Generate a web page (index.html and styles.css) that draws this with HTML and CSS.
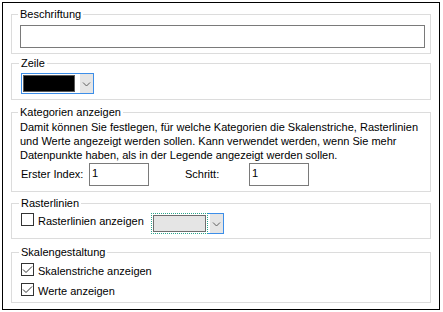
FILE: index.html
```html
<!DOCTYPE html>
<html lang="de">
<head>
    <meta charset="UTF-8">
    <title>Achseneigenschaften</title>
    <link rel="stylesheet" href="styles.css">
</head>
<body>
    <div class="dialog">
        <div class="group group-caption">
            <div class="group-title">Beschriftung</div>
            <input class="textbox wide" type="text" value="">
        </div>

        <div class="group group-line">
            <div class="group-title">Zeile</div>
            <div class="combo">
                <div class="swatch black"></div>
                <div class="drop">
                    <svg width="9" height="6" viewBox="0 0 9 6"><path d="M1 1.5 L4.5 5 L8 1.5" fill="none" stroke="#606060" stroke-width="1"/></svg>
                </div>
            </div>
        </div>

        <div class="group group-categories">
            <div class="group-title">Kategorien anzeigen</div>
            <p class="info">Damit können Sie festlegen, für welche Kategorien die Skalenstriche, Rasterlinien und Werte angezeigt werden sollen. Kann verwendet werden, wenn Sie mehr Datenpunkte haben, als in der Legende angezeigt werden sollen.</p>
            <div class="index-row">
                <label class="first-label">Erster Index:</label>
                <input class="textbox small" type="text" value="1">
                <label class="step-label">Schritt:</label>
                <input class="textbox small" type="text" value="1">
            </div>
        </div>

        <div class="group group-grid">
            <div class="group-title">Rasterlinien</div>
            <div class="grid-row">
                <label class="check"><span class="box"></span><span class="check-text">Rasterlinien anzeigen</span></label>
                <div class="combo-split">
                    <div class="combo-field">
                        <div class="swatch gray"></div>
                    </div>
                    <div class="drop-frame">
                        <div class="drop">
                            <svg width="9" height="6" viewBox="0 0 9 6"><path d="M1 1.5 L4.5 5 L8 1.5" fill="none" stroke="#606060" stroke-width="1"/></svg>
                        </div>
                    </div>
                </div>
            </div>
        </div>

        <div class="group group-scale">
            <div class="group-title">Skalengestaltung</div>
            <label class="check"><span class="box"><svg width="11" height="11" viewBox="0 0 11 11"><path d="M1 5.5 L4 8.5 L10 2.5" fill="none" stroke="#333" stroke-width="1"/></svg></span><span class="check-text">Skalenstriche anzeigen</span></label>
            <label class="check"><span class="box"><svg width="11" height="11" viewBox="0 0 11 11"><path d="M1 5.5 L4 8.5 L10 2.5" fill="none" stroke="#333" stroke-width="1"/></svg></span><span class="check-text">Werte anzeigen</span></label>
        </div>
    </div>
</body>
</html>
```

FILE: styles.css
```css
body {
    margin: 0;
    font-family: "Liberation Sans", Arial, sans-serif;
    font-size: 11px;
    line-height: 13px;
    color: #000;
    background: #fff;
}

.dialog {
    margin: 2px;
    width: 436px;
    height: 306px;
    border: 1px solid #000;
    overflow: hidden;
}

/* group boxes */
.group {
    margin: 0 8px;
    padding: 0 5px 0 8px;
    border: 1px solid #dcdcdc;
    box-sizing: border-box;
}

.group-title {
    display: table;
    margin: -7px 0 0 -2px;
    padding: 0 2px;
    background: #fff;
    line-height: 13px;
}

.group-caption {
    margin-top: 11px;
    height: 40px;
}

.group-line {
    margin-top: 9px;
    height: 37px;
    padding-left: 9px;
}

.group-categories {
    margin-top: 12px;
    height: 80px;
}

.group-grid {
    margin-top: 11px;
    height: 36px;
    padding-left: 9px;
}

.group-scale {
    margin-top: 13px;
    height: 51px;
    padding-left: 9px;
}

/* inputs */
.textbox {
    font-family: inherit;
    font-size: 11px;
    line-height: 13px;
    border: 1px solid #7a7a7a;
    margin: 0;
    height: 23px;
    box-sizing: border-box;
    outline: none;
    color: #000;
    background: #fff;
}

.textbox.wide {
    display: block;
    margin-top: 4px;
    width: 405px;
    padding: 0 2px;
}

.textbox.small {
    width: 60px;
    padding: 2px 2px 6px 2px;
}

.info {
    margin: 1px 0 0 0;
    line-height: 14px;
}

.index-row {
    display: flex;
    align-items: center;
    margin-top: 1px;
}

.first-label {
    margin-left: 1px;
    width: 68px;
}

.step-label {
    margin-left: 36px;
    width: 64px;
}

/* colour combos */
.combo {
    display: flex;
    margin-top: 3px;
    width: 73px;
    height: 21px;
    box-sizing: border-box;
    border: 1px solid #3d8ee8;
}

.swatch {
    margin: 1px;
    width: 52px;
    box-sizing: border-box;
    border: 1px solid #5a5a5a;
}

.swatch.black {
    background: #000;
}

.swatch.gray {
    width: 53px;
    height: 17px;
    border-color: #6d6d6d;
    background: #e5e5e5;
}

.drop {
    margin-left: auto;
    width: 13px;
    background: #e5e5e5;
    display: flex;
    align-items: center;
    justify-content: center;
}

.combo-split {
    display: flex;
    margin-top: 3px;
    height: 21px;
}

.combo-field {
    width: 57px;
    box-sizing: border-box;
    border: 1px dotted #2aa58c;
}

.drop-frame {
    display: flex;
    width: 16px;
    box-sizing: border-box;
    border: 1px solid #3d8ee8;
    border-left: none;
    padding: 0 0 0 2px;
}

.drop-frame .drop {
    width: 13px;
}

/* checkboxes */
.grid-row {
    display: flex;
    align-items: flex-start;
}

.grid-row .check {
    margin-top: -1px;
    width: 130px;
}

.check {
    display: flex;
    align-items: flex-start;
    height: 20px;
}

.box {
    margin-top: 4px;
    margin-right: 4px;
    width: 13px;
    height: 13px;
    box-sizing: border-box;
    border: 1px solid #333;
    display: flex;
    align-items: center;
    justify-content: center;
    background: #fff;
}

.check-text {
    padding-top: 6px;
}
```
